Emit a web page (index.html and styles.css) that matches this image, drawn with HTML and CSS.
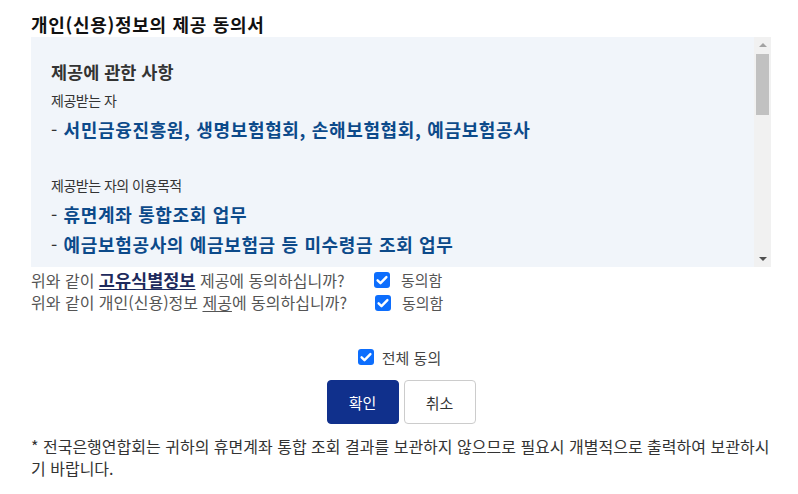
FILE: index.html
```html
<!DOCTYPE html>
<html lang="ko">
<head>
<meta charset="utf-8">
<link rel="stylesheet" href="styles.css">
</head>
<body>
<div class="page">
  <h1 class="title">개인(신용)정보의 제공 동의서</h1>
  <div class="terms">
    <div class="terms-body">
      <p class="sec-title">제공에 관한 사항</p>
      <p class="label">제공받는 자</p>
      <p class="item"><span class="dash">- </span>서민금융진흥원, 생명보험협회, 손해보험협회, 예금보험공사</p>
      <p class="blank"></p>
      <p class="label">제공받는 자의 이용목적</p>
      <p class="item"><span class="dash">- </span>휴면계좌 통합조회 업무</p>
      <p class="item"><span class="dash">- </span>예금보험공사의 예금보험금 등 미수령금 조회 업무</p>
    </div>
    <div class="scrollbar">
      <span class="arrow up"></span>
      <span class="thumb"></span>
      <span class="track"></span>
      <span class="arrow down"></span>
    </div>
  </div>
  <div class="agree-rows">
    <div class="q">위와 같이 <u class="strong">고유식별정보</u> 제공에 동의하십니까?</div>
    <label class="chk"><span class="box"><svg viewBox="0 0 16 16"><path d="M3.6 8.3l2.9 2.9 5.9-6.1" fill="none" stroke="#fff" stroke-width="2.4" stroke-linecap="round" stroke-linejoin="round"/></svg></span>동의함</label>
    <div class="q">위와 같이 개인(신용)정보 <u>제공</u>에 동의하십니까?</div>
    <label class="chk chk2"><span class="box"><svg viewBox="0 0 16 16"><path d="M3.6 8.3l2.9 2.9 5.9-6.1" fill="none" stroke="#fff" stroke-width="2.4" stroke-linecap="round" stroke-linejoin="round"/></svg></span>동의함</label>
  </div>
  <div class="all">
    <label class="chk all-chk"><span class="box"><svg viewBox="0 0 16 16"><path d="M3.6 8.3l2.9 2.9 5.9-6.1" fill="none" stroke="#fff" stroke-width="2.4" stroke-linecap="round" stroke-linejoin="round"/></svg></span>전체 동의</label>
  </div>
  <div class="buttons">
    <button class="btn primary">확인</button>
    <button class="btn secondary">취소</button>
  </div>
  <p class="note">* 전국은행연합회는 귀하의 휴면계좌 통합 조회 결과를 보관하지 않으므로 필요시 개별적으로 출력하여 보관하시기 바랍니다.</p>
</div>
</body>
</html>
```

FILE: styles.css
```css
* { box-sizing: border-box; }
html, body { margin: 0; padding: 0; background: #fff; }
body {
  font-family: "Noto Sans CJK KR", "Noto Sans", sans-serif;
  color: #333;
}
.page {
  padding: 12px 27px 0 31px;
}
.title {
  margin: 0;
  font-size: 18px;
  font-weight: 700;
  line-height: 25px;
  color: #111;
  letter-spacing: 0.7px;
}
.terms {
  display: flex;
  height: 230px;
  background: #f1f5fa;
  overflow: hidden;
}
.terms-body {
  flex: 1;
  padding: 21px 20px 0 20px;
  overflow: hidden;
}
.terms-body p { margin: 0; }
.sec-title {
  font-size: 17.5px;
  font-weight: 700;
  line-height: 28px;
  color: #333;
}
.label {
  font-size: 14px;
  line-height: 28px;
  color: #333;
  letter-spacing: -0.5px;
}
.item {
  font-size: 18px;
  font-weight: 700;
  line-height: 30px;
  color: #0c4a8a;
  letter-spacing: 0.65px;
  white-space: nowrap;
}
.dash { font-weight: 400; color: #333; }
.blank { height: 27px; }
.scrollbar {
  width: 17px;
  background: #f1f1f1;
  display: flex;
  flex-direction: column;
  align-items: center;
}
.arrow {
  width: 0; height: 0;
  border-left: 4px solid transparent;
  border-right: 4px solid transparent;
}
.arrow.up { border-bottom: 4px solid #a3a3a3; margin: 6px 0 7px; }
.arrow.down { border-top: 4px solid #505050; margin: 0 0 6px; }
.thumb { width: 13px; height: 61px; background: #c1c1c1; }
.track { flex: 1; }
.agree-rows {
  display: grid;
  grid-template-columns: 343px auto;
  grid-auto-rows: 23px;
  align-items: center;
  font-size: 16px;
  color: #555;
  padding-top: 1px;
}
.q { white-space: nowrap; line-height: 23px; }
.q u { text-underline-offset: 2px; }
.q .strong {
  font-weight: 700;
  font-size: 17.5px;
  color: #1d2a5c;
}
.chk {
  display: inline-flex;
  align-items: center;
  gap: 11px;
  font-size: 15px;
  color: #555;
}
.chk2 { margin-left: 1px; }
.box {
  width: 16px; height: 16px;
  border-radius: 3px;
  background: #0d6efd;
  display: inline-flex;
}
.box svg { width: 16px; height: 16px; }
.all {
  display: flex;
  justify-content: center;
  margin-top: 31px;
  height: 24px;
  align-items: center;
}
.all-chk { gap: 8px; font-size: 15px; color: #444; margin-left: -3px; }
.buttons {
  display: flex;
  justify-content: center;
  gap: 5px;
  margin-top: 11px;
}
.btn {
  width: 72px; height: 44px;
  border-radius: 4px;
  font-family: inherit;
  font-size: 15px;
  cursor: pointer;
}
.btn.primary {
  background: #10308c;
  border: 1px solid #10308c;
  color: #fff;
}
.btn.secondary {
  background: #fff;
  border: 1px solid #ccc;
  color: #333;
}
.note {
  margin: 11px 0 0;
  font-size: 16px;
  line-height: 22px;
  color: #333;
}
```
